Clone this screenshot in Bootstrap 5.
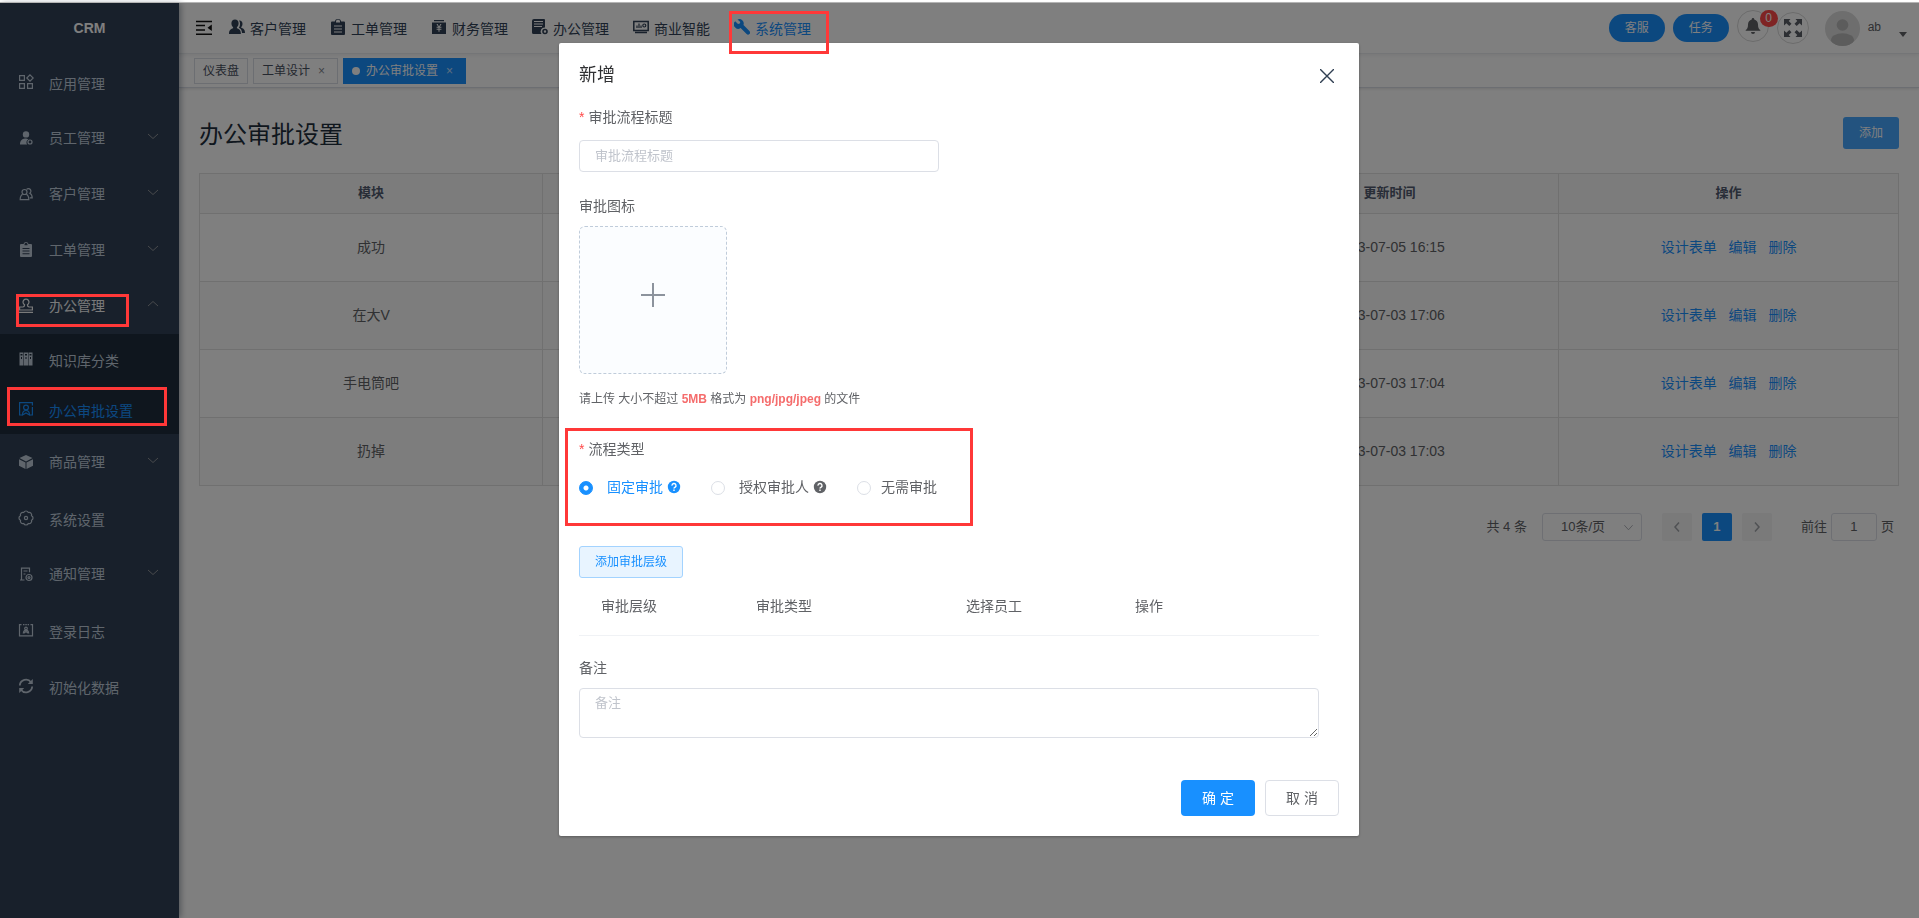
<!DOCTYPE html>
<html lang="zh-CN">
<head>
<meta charset="utf-8">
<meta name="viewport" content="width=device-width, initial-scale=1">
<title>CRM</title>
<link href="https://cdn.jsdelivr.net/npm/bootstrap@5.3.0/dist/css/bootstrap.min.css" rel="stylesheet">
<style>
  :root { --brand: #1890ff; --ink: #606266; --line: #dcdfe6; --hint: #c0c4cc; }
  body { font-family: "Liberation Sans", "Noto Sans CJK SC", sans-serif; font-size: 14px; line-height: 24px; color: var(--ink); background: #fff; overflow: hidden; }
  a { text-decoration: none; }
  svg { display: block; flex: none; }
  .ico { width: 16px; height: 16px; fill: currentColor; }
  .ico-line { fill: none; stroke: currentColor; stroke-width: 1.2; }
  .shell { border-top: 3px solid #fff; }
  .edge { position: fixed; inset: 2px 0 auto 0; height: 1px; background: #b4b4b4; z-index: 1070; }

  /* sidebar */
  .side { position: relative; width: 179px; background: #304156; color: #bfcbd9; box-shadow: 2px 0 6px rgba(0, 21, 41, .35); }
  .brand-name { height: 51px; font-weight: 700; line-height: 51px; color: #fff; }
  .side a { height: 56px; padding: 0 20px 0 18px; gap: 15px; color: #bfcbd9; position: relative; }
  .side .leaf span { padding-top: 4px; }
  .side a.opened { color: #f4f4f5; }
  .side .sub { background: #1f2d3d; }
  .side .sub a { height: 50px; }
  .side a.current { color: var(--brand); }
  .side .arrow { width: 12px; height: 12px; margin-bottom: 4px; fill: none; stroke: #909399; }

  /* top bar */
  .top { height: 51px; padding: 0 12px 0 17px; border-bottom: 1px solid #eef0f3; box-shadow: 0 1px 4px rgba(0, 21, 41, .08); }
  .top-menu { gap: 24px; margin-left: 17px; }
  .top-menu a { gap: 5px; color: #304156; position: relative; }
  .top-menu .ico { margin-bottom: 3px; }
  .top-menu a span { padding-top: 2px; }
  .top-menu a.current { color: var(--brand); }
  .pill { width: 56px; height: 28px; border: 0; border-radius: 14px; padding: 0; font-size: 12px; background: var(--brand); color: #fff; }
  .round { width: 32px; height: 32px; padding: 0; border: 1px solid #d8d8d8; border-radius: 50%; background: none; color: #606266; position: relative; }
  .count { position: absolute; top: -1px; right: -10px; min-width: 18px; height: 17px; border-radius: 9px; background: #ff4949; color: #fff; font-size: 12px; line-height: 17px; }
  .who { font-size: 12px; margin-bottom: 2px; }
  .drop { border: 4px solid transparent; border-top: 5px solid #606266; border-bottom: 0; margin: 12px 0 0 18px; }

  .tabs { height: 34px; padding: 0 15px; gap: 5px; border-bottom: 1px solid #d8dce5; box-shadow: 0 1px 3px rgba(0, 0, 0, .12); font-size: 12px; }
  .tabs a { height: 26px; padding: 0 8px; border: 1px solid #d8dce5; color: #495060; }
  .tabs a.current { background: var(--brand); border-color: var(--brand); color: #fff; }
  .tabs i { font-style: normal; width: 15px; margin-left: 4px; text-align: center; opacity: .7; }
  .dot { width: 8px; height: 8px; border-radius: 50%; background: #fff; margin-right: 6px; }

  /* list page */
  .page { padding: 29px 20px; }
  .page h1 { font-size: 24px; line-height: 36px; font-weight: 400; color: #1f2f3d; }
  .add { width: 56px; height: 32px; padding: 0; border: 0; border-radius: 3px; font-size: 12px; background: #46a6ff; color: #fff; }
  .grid { table-layout: fixed; margin: 20px 0 27px; text-align: center; vertical-align: middle; font-size: 14px; --bs-table-bg: transparent; }
  .grid th, .grid td { padding: 0 0 2px; border: 1px solid #e0e0e0; color: var(--ink); vertical-align: middle; }
  .grid th { height: 40px; font-size: 13px; color: #515a6e; background: #f8f8f9; }
  .grid td { height: 68px; }
  .grid tr:nth-child(even) td { background: #fafafa; }
  .grid td a { color: var(--brand); margin: 0 4px; }
  .pager { font-size: 13px; line-height: 28px; padding-right: 5px; }
  .pager select { width: 100px; height: 28px; padding: 0 18px; margin: 0 20px 0 15px; font-size: 13px; line-height: 26px; color: var(--ink); border: 1px solid var(--line); border-radius: 3px; background-position: right 7px center; background-size: 11px; background-image: url("data:image/svg+xml,%3csvg xmlns='http://www.w3.org/2000/svg' viewBox='0 0 12 12'%3e%3cpath fill='none' stroke='%23a8abb2' d='M1.500 3.500L6 8.500l4.500-5'/%3e%3c/svg%3e"); }
  .pager button { width: 30px; height: 28px; margin-right: 10px; padding: 0; border: 0; border-radius: 2px; background: #f4f4f5; color: #a0a3a8; }
  .pager button.current { background: var(--brand); color: #fff; font-weight: 700; }
  .pager label { margin-left: 19px; }
  .pager input { width: 46px; height: 28px; margin: 0 4px; padding: 0; text-align: center; font-size: 13px; color: var(--ink); border: 1px solid var(--line); border-radius: 3px; }

  /* dialog */
  .modal { background: rgba(0, 0, 0, .5); top: 3px; padding-right: 1px; overflow: hidden; z-index: 1050; }
  .modal-dialog { max-width: 800px; margin: 40px auto; }
  .modal-content { border: 0; border-radius: 2px; padding: 20px; color: var(--ink); box-shadow: 0 1px 3px rgba(0, 0, 0, .3); }
  .modal h2 { font-size: 18px; line-height: 24px; font-weight: 400; color: #303133; }
  .shut { border: 0; background: none; padding: 0; margin: 2px 5px 0 0; }
  .fields { padding: 18px 20px 0 0; }
  .cap { display: block; line-height: 24px; margin: 0 0 8px; font-size: 14px; }
  .req { margin-bottom: 11px; }
  .req::before { content: "*"; color: #ff4949; margin-right: 4px; }
  .box { border: 1px solid var(--line); border-radius: 4px; padding: 0 15px; font-size: 13px; color: var(--ink); }
  .box::placeholder { color: var(--hint); }
  .title-box { width: 360px; height: 32px; margin-bottom: 22px; padding-bottom: 2px; }
  .upload { width: 148px; height: 148px; border: 1px dashed #c0ccda; border-radius: 6px; background: #fbfdff; padding: 0 0 10px; }
  .tip { font-size: 12px; line-height: 20px; margin: 15px 0 28px; }
  .tip b { color: #f56c6c; }
  .kinds { height: 30px; gap: 30px; margin-bottom: 44px; }
  .kinds input { appearance: none; width: 14px; height: 14px; margin: 2px 10px 0 0; border: 1px solid var(--line); border-radius: 50%; }
  .kinds input:checked { border-color: var(--brand); background: radial-gradient(circle, #fff 2px, var(--brand) 3px); }
  .kinds input:checked ~ span { color: var(--brand); }
  .kinds span { display: flex; align-items: center; gap: 4px; }
  .kinds .wide { padding-left: 4px; }
  .add-level { width: 104px; height: 32px; padding: 0; font-size: 12px; color: var(--brand); background: #e8f4ff; border: 1px solid #a3d3ff; border-radius: 3px; }
  .levels { width: 100%; table-layout: fixed; margin-bottom: 20px; text-align: center; border-bottom: 1px solid #f0f2f5; }
  .levels th { height: 57px; font-weight: 400; }
  .levels .slim { width: 100px; }
  .levels .broad { width: 210px; }
  .memo { width: 100%; height: 50px; padding: 4px 15px; line-height: 20px; resize: vertical; display: block; }
  .foot { gap: 10px; margin-top: 42px; }
  .foot button { width: 74px; height: 36px; padding: 0; font-size: 14px; border-radius: 4px; }
  .foot .ok { background: var(--brand); color: #fff; border: 0; }
  .foot .no { background: #fff; color: var(--ink); border: 1px solid var(--line); }

  /* red call-out frames, drawn over everything */
  .frame { position: absolute; border: 3px solid #ff3838; z-index: 1080; pointer-events: none; }
  .frame-parent { inset: 16px 50px 7px 16px; }
  .frame-child { inset: 3px 12px 8px 7px; }
  .frame-menu { inset: -4px -18px -13px -5px; }
  .frame-kinds { inset: -9px 346px -24px -14px; }
</style>
</head>
<body>
<div class="edge"></div>
<div class="shell d-flex min-vh-100">
  <aside class="side flex-shrink-0">
    <div class="brand-name text-center">CRM</div>
    <nav>
      <a href="#" class="leaf d-flex align-items-center"><svg class="ico ico-line" viewBox="0 0 16 16"><path d="M1.600 1.600h4.800v4.800H1.600zM1.600 9.600h4.800v4.800H1.600zM9.600 9.600h4.800v4.800H9.600zM12 .8L15.200 4 12 7.200 8.800 4z"/></svg><span>应用管理</span></a>
      <a href="#" class="d-flex align-items-center"><svg class="ico" viewBox="0 0 16 16"><circle cx="8" cy="4.400" r="3.200"/><path d="M2 14.600c0-4 2-6 5-6.200 1.600 0 2.600.3 3.400.9a3.400 3.400 0 0 0-1.200 5.300z"/><circle cx="12" cy="12" r="2" fill="none" stroke="currentColor" stroke-width="1.200"/></svg><span>员工管理</span><svg class="arrow ms-auto" viewBox="0 0 12 12"><path d="M1 4l5 4.500L11 4"/></svg></a>
      <a href="#" class="d-flex align-items-center"><svg class="ico ico-line" viewBox="0 0 16 16"><circle cx="6.500" cy="6" r="2.500"/><path d="M4.700 8.200C3 9 2.200 11 2.200 13.600h8.600C10.800 11 10 9 8.300 8.200M8.600 3.400a2.500 2.500 0 1 1 3.200 3.800c1.600.8 2.400 2.400 2.400 4.600h-2.400"/></svg><span>客户管理</span><svg class="arrow ms-auto" viewBox="0 0 12 12"><path d="M1 4l5 4.500L11 4"/></svg></a>
      <a href="#" class="d-flex align-items-center"><svg class="ico" viewBox="0 0 16 16"><path fill-rule="evenodd" d="M5.500 2a2.600 2.600 0 0 1 5 0H13a1 1 0 0 1 1 1v11a1 1 0 0 1-1 1H3a1 1 0 0 1-1-1V3a1 1 0 0 1 1-1zM6.500 2.200v1h3v-1a1.500 1.500 0 0 0-3 0zM4.500 6v1h7V6zm0 2.600v1h7v-1zm0 2.600v1h7v-1z"/></svg><span>工单管理</span><svg class="arrow ms-auto" viewBox="0 0 12 12"><path d="M1 4l5 4.500L11 4"/></svg></a>
      <a href="#" class="opened d-flex align-items-center"><svg class="ico ico-line" viewBox="0 0 16 16"><path d="M6.600 6.800a3 3 0 1 1 2.800 0c0 1.200.6 2 1.600 2.200h3.400v3H1.600V9H5c1-.2 1.600-1 1.600-2.200zM1 14.400h14"/></svg><span>办公管理</span><svg class="arrow ms-auto" viewBox="0 0 12 12"><path d="M1 8l5-4.500L11 8"/></svg><div class="frame frame-parent"></div></a>
      <div class="sub">
        <a href="#" class="leaf d-flex align-items-center"><svg class="ico" viewBox="0 0 16 16"><path fill-rule="evenodd" d="M1.500 1.500h4v13h-4zM6 1.500h4v13H6zM10.500 1.500h4v13h-4zM2.500 3v1.500h2V3zM7 3v1.500h2V3zM11.500 3v1.500h2V3zM3 6v2h1V6zM7.500 6v2h1V6zM12 6v2h1V6z"/></svg><span>知识库分类</span></a>
        <a href="#" class="current leaf d-flex align-items-center"><svg class="ico ico-line" viewBox="0 0 16 16"><path d="M4 14H1.600V1.600h12.800v3M14.400 6v8H12M4.500 14c0-3 1-4.500 3.500-4.500s3.500 1.500 3.500 4.500L8 12z"/><circle cx="8" cy="6.500" r="2.400"/></svg><span>办公审批设置</span><div class="frame frame-child"></div></a>
      </div>
      <a href="#" class="d-flex align-items-center"><svg class="ico" viewBox="0 0 16 16"><path d="M8 1l6.500 3L8 7.400 1.500 4zM1 5.200l6.500 3.200V15L1 11.800zM15 5.200L8.500 8.400V15l6.500-3.200z"/></svg><span>商品管理</span><svg class="arrow ms-auto" viewBox="0 0 12 12"><path d="M1 4l5 4.500L11 4"/></svg></a>
      <a href="#" class="leaf d-flex align-items-center"><svg class="ico ico-line" viewBox="0 0 16 16"><path d="M5.700 2.500a2.500 2.500 0 0 1 4.600 0 2.500 2.500 0 0 1 3.200 3.200 2.500 2.500 0 0 1 0 4.600 2.500 2.500 0 0 1-3.200 3.200 2.500 2.500 0 0 1-4.600 0 2.500 2.500 0 0 1-3.200-3.200 2.500 2.500 0 0 1 0-4.600 2.500 2.500 0 0 1 3.200-3.200z"/><circle cx="8" cy="8" r="1.600"/></svg><span>系统设置</span></a>
      <a href="#" class="d-flex align-items-center"><svg class="ico ico-line" viewBox="0 0 16 16"><path d="M6.500 14H2M3.500 14V2.200h8v4M5.500 5h4M5.500 8h2"/><circle cx="11" cy="11.500" r="3"/><circle cx="11" cy="11.500" r="1"/></svg><span>通知管理</span><svg class="arrow ms-auto" viewBox="0 0 12 12"><path d="M1 4l5 4.500L11 4"/></svg></a>
      <a href="#" class="leaf d-flex align-items-center"><svg class="ico ico-line" viewBox="0 0 16 16"><path d="M3.500 2.600h-2v11.200h13V2.600h-2M5 2.600h1.500M7.300 2.600h1.500M9.600 2.600H11M5.300 11.500C5.500 9 6.500 8.200 8 8.200s2.500.8 2.700 3.300M6 11l2-1.500 2 1.500"/><circle cx="8" cy="6.500" r="1.300"/></svg><span>登录日志</span></a>
      <a href="#" class="leaf d-flex align-items-center"><svg class="ico ico-line" viewBox="0 0 16 16"><path stroke-width="1.800" d="M1.800 7.500A6.200 6.200 0 0 1 13 4.300M14.200 8.500A6.200 6.200 0 0 1 3 11.700"/><path fill="currentColor" stroke="none" d="M14.800 1v5h-5zM1.200 15v-5h5z"/></svg><span>初始化数据</span></a>
    </nav>
  </aside>

  <div class="flex-grow-1">
    <header class="top d-flex align-items-center">
      <svg width="16" height="16" viewBox="0 0 16 16" stroke="#111" stroke-width="1.500"><path d="M0 1.500h16M0 5.500h9M0 10h9M0 14.200h16"/><path stroke="none" fill="#111" d="M15.800 4.500v6.500L11.500 7.800z"/></svg>
      <nav class="top-menu d-flex">
        <a href="#" class="d-flex align-items-center"><svg class="ico" viewBox="0 0 16 16"><path d="M6 .5c2.200 0 3.600 1.500 3.600 3.800 0 1.800-.8 3.200-1.700 4v1c2.600 1 4 1.800 4 5.700H0c0-3.900 1.500-4.700 4.100-5.700v-1c-.9-.8-1.700-2.200-1.700-4C2.400 2 3.800.5 6 .5zM10.500 1.500c1.900 0 3 1.300 3 3.200 0 1.500-.5 2.600-1.300 3.300v.8c2.400.9 3.800 1.700 3.800 5.200h-3c-.2-3-1.200-4.200-3.200-5.200.8-1 1.200-2.400 1.200-4 0-1.400-.3-2.400-1-3.200z"/></svg><span>客户管理</span></a>
        <a href="#" class="d-flex align-items-center"><svg class="ico" viewBox="0 0 16 16"><path fill-rule="evenodd" d="M4.800 2.400a3.300 3.300 0 0 1 6.400 0H14a1 1 0 0 1 1 1V15a1 1 0 0 1-1 1H2a1 1 0 0 1-1-1V3.400a1 1 0 0 1 1-1zM6 2.400v1.200h4V2.400a2 2 0 0 0-4 0zM4 6.500v1h8v-1zm0 3v1h8v-1zm0 3v1h8v-1z"/></svg><span>工单管理</span></a>
        <a href="#" class="d-flex align-items-center"><svg class="ico" viewBox="0 0 16 16"><path fill-rule="evenodd" d="M3 1h10v1.200H3zM1 3.500h14V15H1zM5.500 5l1.600 2.700H5.600v1h1.900v1H5.600v1h1.900v2h1v-2h1.900v-1H8.500v-1h1.900v-1H8.900L10.500 5H9.400L8 7.400 6.600 5z"/></svg><span>财务管理</span></a>
        <a href="#" class="d-flex align-items-center"><svg class="ico" viewBox="0 0 16 16"><path fill-rule="evenodd" d="M2 0h10a1 1 0 0 1 1 1v7.500a4 4 0 0 0-3.500 6.500H1.500A1.500 1.500 0 0 1 0 13.500V2a2 2 0 0 1 2-2zM2 2v1h9V2zm0 2.500v1h9v-1zM2 7v1h8V7z"/><circle cx="13" cy="12.500" r="2" fill="none" stroke="currentColor" stroke-width="1.600"/></svg><span>办公管理</span></a>
        <a href="#" class="d-flex align-items-center"><svg class="ico ico-line" viewBox="0 0 16 16"><path stroke-width="1.500" d="M.8 2.500h14.400v9H.8zM2 13.500h12"/><path d="M4 9V6.500M6 9V4.500M8 9V6.500"/><circle cx="11.300" cy="6.500" r="1.500"/></svg><span>商业智能</span></a>
        <a href="#" class="current d-flex align-items-center"><svg class="ico" viewBox="0 0 16 16"><path d="M1.200 2.200L4 5l1.800-.4L6.300 3 3.500.5a4.400 4.400 0 0 1 6 5.400l5.900 6.200a1.900 1.900 0 0 1-2.800 2.900L6.600 9.100a4.400 4.400 0 0 1-5.400-6.900z"/></svg><span>系统管理</span><div class="frame frame-menu"></div></a>
      </nav>
      <div class="d-flex align-items-center gap-2 ms-auto">
        <button class="pill" type="button">客服</button>
        <button class="pill" type="button">任务</button>
        <button class="round mb-1" type="button" aria-label="消息"><svg class="ico mx-auto" viewBox="0 0 16 16"><path d="M8 0a1.200 1.200 0 0 1 1.200 1.400C11.500 2 13 3.800 13 6.500c0 3 .7 4.500 2.300 5.500v.8H.7V12C2.300 11 3 9.500 3 6.500c0-2.700 1.500-4.500 3.800-5.100A1.200 1.200 0 0 1 8 0zM6 14h4a2 2 0 0 1-4 0z"/></svg><span class="count">0</span></button>
        <button class="round" type="button" aria-label="全屏"><svg class="mx-auto" width="18" height="18" viewBox="0 0 18 18" fill="#5a5e66"><path d="M0 0h6.500L4.700 1.900l2.800 2.800L5.300 7 2.400 4.200 0 6.500zM18 0v6.500l-2.400-2.300L12.700 7l-2.200-2.300 2.800-2.800L11.500 0zM0 18v-6.500l2.400 2.300L5.300 11l2.200 2.300-2.800 2.800L6.500 18zM18 18h-6.500l1.800-1.900-2.800-2.800 2.200-2.300 2.900 2.800 2.400-2.300z"/></svg></button>
        <svg class="ms-2" width="35" height="35" viewBox="0 0 35 35"><defs><clipPath id="face"><circle cx="17.500" cy="17.500" r="17.500"/></clipPath></defs><g clip-path="url(#face)"><path fill="#dcdcdc" d="M0 0h35v35H0z"/><circle cx="17.500" cy="14" r="5.800" fill="#b8b8b8"/><ellipse cx="17.500" cy="29" rx="11.500" ry="6.800" fill="#b8b8b8"/></g></svg>
        <span class="who">ab</span>
      </div>
      <span class="drop"></span>
    </header>
    <div class="tabs d-flex align-items-center">
      <a href="#" class="d-flex align-items-center">仪表盘</a>
      <a href="#" class="d-flex align-items-center">工单设计<i>×</i></a>
      <a href="#" class="current d-flex align-items-center"><span class="dot"></span>办公审批设置<i>×</i></a>
    </div>

    <main class="page">
      <div class="d-flex justify-content-between">
        <h1 class="m-0">办公审批设置</h1>
        <button class="add" type="button">添加</button>
      </div>
      <table class="table grid">
        <colgroup><col style="width:20.2%"><col style="width:20%"><col style="width:19.9%"><col style="width:19.9%"><col style="width:20%"></colgroup>
        <thead><tr><th>模块</th><th></th><th></th><th>更新时间</th><th>操作</th></tr></thead>
        <tbody>
          <tr><td>成功</td><td></td><td></td><td>2023-07-05 16:15</td><td><a href="#">设计表单</a> <a href="#">编辑</a> <a href="#">删除</a></td></tr>
          <tr><td>在大V</td><td></td><td></td><td>2023-07-03 17:06</td><td><a href="#">设计表单</a> <a href="#">编辑</a> <a href="#">删除</a></td></tr>
          <tr><td>手电筒吧</td><td></td><td></td><td>2023-07-03 17:04</td><td><a href="#">设计表单</a> <a href="#">编辑</a> <a href="#">删除</a></td></tr>
          <tr><td>扔掉</td><td></td><td></td><td>2023-07-03 17:03</td><td><a href="#">设计表单</a> <a href="#">编辑</a> <a href="#">删除</a></td></tr>
        </tbody>
      </table>
      <div class="pager d-flex justify-content-end">
        <span>共 4 条</span>
        <select class="form-select" aria-label="每页条数"><option>10条/页</option></select>
        <button type="button" aria-label="上一页"><svg class="mx-auto" width="12" height="12" viewBox="0 0 12 12" fill="none" stroke="currentColor" stroke-width="1.500"><path d="M8 1.500L4 6l4 4.500"/></svg></button>
        <button type="button" class="current">1</button>
        <button type="button" aria-label="下一页"><svg class="mx-auto" width="12" height="12" viewBox="0 0 12 12" fill="none" stroke="currentColor" stroke-width="1.500"><path d="M4 1.500L8 6l-4 4.500"/></svg></button>
        <label for="goto">前往</label>
        <input id="goto" type="text" value="1">
        <span>页</span>
      </div>
    </main>
  </div>
</div>

<div class="modal d-block" role="dialog" aria-labelledby="dlg-title">
  <div class="modal-dialog">
    <form class="modal-content">
      <div class="d-flex justify-content-between align-items-center">
        <h2 class="m-0" id="dlg-title">新增</h2>
        <button class="shut" type="button" aria-label="关闭"><svg width="14" height="14" viewBox="0 0 14 14" stroke="#303f52" stroke-width="1.400"><path d="M0 0l14 14M14 0L0 14"/></svg></button>
      </div>
      <div class="fields">
        <label class="cap req" for="flow-title">审批流程标题</label>
        <input class="box title-box d-block" id="flow-title" type="text" placeholder="审批流程标题">
        <span class="cap">审批图标</span>
        <button class="upload d-block" type="button" aria-label="上传图标"><svg class="mx-auto" width="24" height="24" viewBox="0 0 24 24" stroke="#8c939d" stroke-width="2"><path d="M12 0v24M0 12h24"/></svg></button>
        <p class="tip">请上传 大小不超过 <b>5MB</b> 格式为 <b>png/jpg/jpeg</b> 的文件</p>
        <div class="position-relative">
          <span class="cap req">流程类型</span>
          <div class="kinds d-flex align-items-center">
            <label class="d-flex align-items-center"><input type="radio" name="kind" checked><span class="wide">固定审批<svg width="14" height="14" viewBox="0 0 14 14"><circle cx="7" cy="7" r="6.200" fill="currentColor"/><path d="M5 5.600a2 2 0 1 1 2.900 1.700c-.7.400-.9.600-.9 1.200M7 9.600v1.300" fill="none" stroke="#fff" stroke-width="1.400"/></svg></span></label>
            <label class="d-flex align-items-center"><input type="radio" name="kind"><span class="wide">授权审批人<svg width="14" height="14" viewBox="0 0 14 14"><circle cx="7" cy="7" r="6.200" fill="currentColor"/><path d="M5 5.600a2 2 0 1 1 2.900 1.700c-.7.400-.9.600-.9 1.200M7 9.600v1.300" fill="none" stroke="#fff" stroke-width="1.400"/></svg></span></label>
            <label class="d-flex align-items-center"><input type="radio" name="kind"><span>无需审批</span></label>
          </div>
          <div class="frame frame-kinds"></div>
        </div>
        <button class="add-level d-block" type="button">添加审批层级</button>
        <table class="levels">
          <thead><tr><th class="slim">审批层级</th><th class="broad">审批类型</th><th class="broad">选择员工</th><th class="slim">操作</th><th></th></tr></thead>
        </table>
        <label class="cap" for="memo">备注</label>
        <textarea class="box memo" id="memo" placeholder="备注"></textarea>
      </div>
      <div class="foot d-flex justify-content-end">
        <button class="ok" type="button">确 定</button>
        <button class="no" type="button">取 消</button>
      </div>
    </form>
  </div>
</div>
<script src="https://cdn.jsdelivr.net/npm/bootstrap@5.3.0/dist/js/bootstrap.bundle.min.js"></script>
</body>
</html>
